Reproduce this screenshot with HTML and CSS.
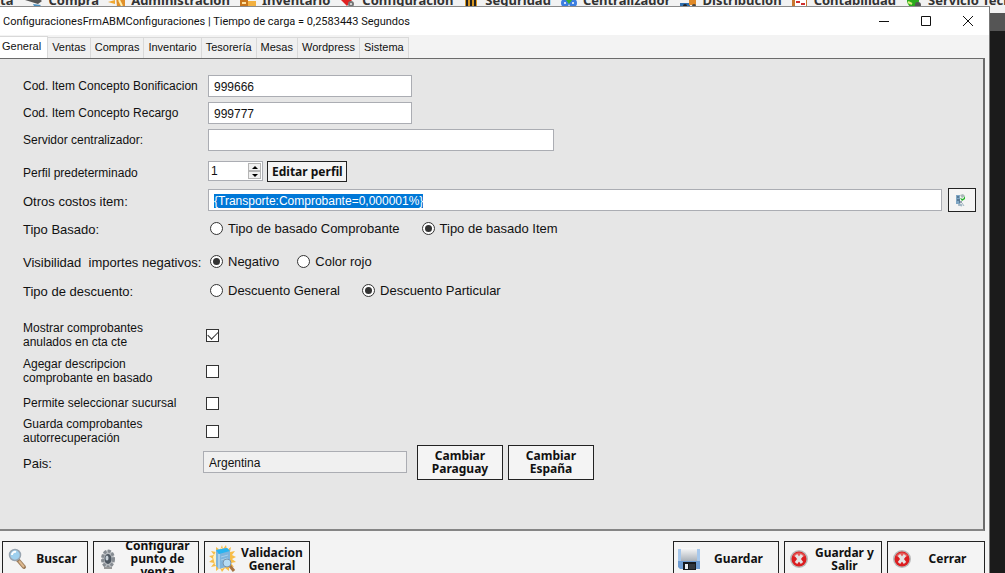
FILE: index.html
```html
<!DOCTYPE html>
<html lang="es">
<head>
  <meta charset="UTF-8">
  <meta name="viewport" content="width=device-width, initial-scale=1.0">
  <title>ConfiguracionesFrmABMConfiguraciones</title>
  <link rel="stylesheet" href="styles.css">
</head>
<body>
  <nav class="menubar">
    <span class="menu-item first">ta</span>
    <span class="menu-item">
      <svg width="20" height="16" viewBox="0 0 20 16"><path d="M1 8l12-3 5 4-4 3z" fill="#555"/><path d="M9 12l8 1-2 2-5-1z" fill="#4a8fc0"/></svg>
      Compra</span>
    <span class="menu-item">
      <svg width="20" height="16" viewBox="0 0 20 16"><path d="M1 10l7-2v4z" fill="#f0a830"/><path d="M9 4h9v11h-8z" fill="#e0902a"/><path d="M12 8l3 6" stroke="#fff0b0" stroke-width="2"/></svg>
      Administracion</span>
    <span class="menu-item">
      <svg width="20" height="16" viewBox="0 0 20 16"><path d="M2 4h8v11H2z" fill="#c8761c"/><path d="M10 9h8v6h-8z" fill="#f2b040"/><path d="M4 11h4" stroke="#ffe2a0" stroke-width="2"/></svg>
      Inventario</span>
    <span class="menu-item">
      <svg width="20" height="16" viewBox="0 0 20 16"><path d="M3 8h11l-5 6z" fill="#e02020"/><circle cx="13" cy="12" r="3" fill="#777"/><circle cx="13" cy="12" r="1" fill="#eee"/></svg>
      Configuracion</span>
    <span class="menu-item">
      <svg width="20" height="16" viewBox="0 0 20 16"><path d="M4 6h12v9H4z" fill="#d99722"/><path d="M6 8v7M10 8v7M14 8v7" stroke="#222" stroke-width="2"/></svg>
      Seguridad</span>
    <span class="menu-item">
      <svg width="20" height="16" viewBox="0 0 20 16"><circle cx="6" cy="11" r="4" fill="#3b7ee0"/><circle cx="14" cy="11" r="4" fill="#3b7ee0"/><path d="M7 8h6l-3 4z" fill="#3bb030"/><circle cx="6" cy="11" r="1" fill="#fff"/><circle cx="14" cy="11" r="1" fill="#fff"/></svg>
      Centralizador</span>
    <span class="menu-item">
      <svg width="20" height="16" viewBox="0 0 20 16"><path d="M1 11h10v4H1z" fill="#2f6fb0"/><path d="M10 7h7v6h-7z" fill="#e08a28"/><circle cx="6" cy="14" r="2" fill="#222"/><circle cx="15" cy="14" r="2" fill="#444"/></svg>
      Distribucion</span>
    <span class="menu-item">
      <svg width="20" height="16" viewBox="0 0 20 16"><path d="M2 5h15v10H2z" fill="#c87830"/><path d="M5 7h11v7H5z" fill="#fff"/><path d="M6 10h4M11 12h4" stroke="#d03030" stroke-width="2"/></svg>
      Contabilidad</span>
    <span class="menu-item">
      <svg width="20" height="16" viewBox="0 0 20 16"><circle cx="9" cy="9" r="6" fill="#2cab1e"/><path d="M4 10l4 2" stroke="#d9f07a" stroke-width="2"/><circle cx="14" cy="13" r="3" fill="#555"/></svg>
      Servicio Tecnico</span>
  </nav>

  <main class="window">
    <header class="titlebar">
      <span class="title">ConfiguracionesFrmABMConfiguraciones | Tiempo de carga = 0,2583443 Segundos</span>
      <button type="button" class="win-btn" aria-label="Minimizar">
        <svg width="12" height="12" viewBox="0 0 12 12"><path d="M1 6.500h10" stroke="#111"/></svg>
      </button>
      <button type="button" class="win-btn" aria-label="Maximizar">
        <svg width="12" height="12" viewBox="0 0 12 12"><path d="M1.500 1.500h9v9h-9z" fill="none" stroke="#111"/></svg>
      </button>
      <button type="button" class="win-btn" aria-label="Cerrar ventana">
        <svg width="12" height="12" viewBox="0 0 12 12"><path d="M1 1l10 10M11 1L1 11" stroke="#111"/></svg>
      </button>
    </header>

    <div class="tabs" role="tablist">
      <button type="button" class="tab active" role="tab" aria-selected="true">General</button>
      <button type="button" class="tab" role="tab">Ventas</button>
      <button type="button" class="tab" role="tab">Compras</button>
      <button type="button" class="tab" role="tab">Inventario</button>
      <button type="button" class="tab" role="tab">Tesorería</button>
      <button type="button" class="tab" role="tab">Mesas</button>
      <button type="button" class="tab" role="tab">Wordpress</button>
      <button type="button" class="tab" role="tab">Sistema</button>
    </div>

    <form class="panel" id="config-form">
      <div class="row h27">
        <label class="caption small" for="bonificacion">Cod. Item Concepto Bonificacion</label>
        <input type="text" class="box code" id="bonificacion" value="999666">
      </div>
      <div class="row h27">
        <label class="caption small" for="recargo">Cod. Item Concepto Recargo</label>
        <input type="text" class="box code" id="recargo" value="999777">
      </div>
      <div class="row h28">
        <label class="caption small" for="servidor">Servidor centralizador:</label>
        <input type="text" class="box server" id="servidor">
      </div>
      <div class="row h34">
        <label class="caption small low" for="perfil">Perfil predeterminado</label>
        <div class="spinner">
          <input type="number" id="perfil" value="1">
          <div class="arrows">
            <button type="button" id="perfil-up" aria-label="Subir"><svg width="6" height="3" viewBox="0 0 6 3"><path d="M0 3l3-3 3 3z"/></svg></button>
            <button type="button" id="perfil-down" aria-label="Bajar"><svg width="6" height="3" viewBox="0 0 6 3"><path d="M0 0l3 3 3-3z"/></svg></button>
          </div>
        </div>
        <button type="button" class="btn edit">Editar perfil</button>
      </div>
      <div class="row h24">
        <label class="caption low" for="costos">Otros costos item:</label>
        <input type="text" class="box costs" id="costos" value="{Transporte:Comprobante=0,000001%}">
        <button type="button" class="btn pick" aria-label="Elegir costos">
          <svg width="12" height="14" viewBox="0 0 12 14"><path d="M1 2h4v9H1z" fill="#7fa6c4"/><path d="M2 4h2M2 7h3M4 9h3" stroke="#34506a"/><path d="M5 2l3-1 2 2-3 2z" fill="#a9b8b8"/><path d="M5 5l3 1 2-3v3l-3 2z" fill="#27b52c"/><path d="M3 12l3-1 1 2zM7 10l2 3" fill="#9fb4c2" stroke="#9fb4c2"/></svg>
        </button>
      </div>
      <div class="row h32" role="radiogroup" aria-labelledby="lb-basado">
        <span class="caption low" id="lb-basado">Tipo Basado:</span>
        <div class="options">
          <label><input type="radio" name="basado">Tipo de basado Comprobante</label>
          <label><input type="radio" name="basado" checked>Tipo de basado Item</label>
        </div>
      </div>
      <div class="row h34" role="radiogroup" aria-labelledby="lb-negativos">
        <span class="caption low" id="lb-negativos">Visibilidad&nbsp; importes negativos:</span>
        <div class="options close">
          <label><input type="radio" name="negativos" checked>Negativo</label>
          <label><input type="radio" name="negativos">Color rojo</label>
        </div>
      </div>
      <div class="row h24" role="radiogroup" aria-labelledby="lb-descuento">
        <span class="caption low" id="lb-descuento">Tipo de descuento:</span>
        <div class="options">
          <label><input type="radio" name="descuento">Descuento General</label>
          <label><input type="radio" name="descuento" checked>Descuento Particular</label>
        </div>
      </div>

      <div class="checks">
        <div class="row h36">
          <label class="caption" for="anulados">Mostrar comprobantes<br>anulados en cta cte</label>
          <input type="checkbox" id="anulados" checked>
        </div>
        <div class="row h36">
          <label class="caption" for="descripcion">Agegar descripcion<br>comprobante en basado</label>
          <input type="checkbox" id="descripcion">
        </div>
        <div class="row h28">
          <label class="caption" for="sucursal">Permite seleccionar sucursal</label>
          <input type="checkbox" id="sucursal">
        </div>
        <div class="row h28">
          <label class="caption" for="recuperacion">Guarda comprobantes<br>autorrecuperación</label>
          <input type="checkbox" id="recuperacion">
        </div>
      </div>

      <div class="row h34 country">
        <label class="caption low" for="pais">Pais:</label>
        <input type="text" class="box code" id="pais" value="Argentina" readonly>
        <button type="button" class="btn change">Cambiar Paraguay</button>
        <button type="button" class="btn change">Cambiar España</button>
      </div>
    </form>

    <footer class="actions">
      <button type="button" class="btn action narrow">
        <svg width="20" height="22" viewBox="0 0 20 22"><path d="M11 12l6 7" stroke="#9a7a58" stroke-width="4" stroke-linecap="round"/><path d="M12 13l5 6" stroke="#dcb88e" stroke-width="2"/><circle cx="8" cy="7" r="5.500" fill="#9fd0ee" stroke="#98a4b0" stroke-width="1.500"/><path d="M5 7a3 3 0 0 1 4-3" fill="none" stroke="#fff" stroke-width="2"/></svg>
        <span>Buscar</span>
      </button>
      <button type="button" class="btn action">
        <svg width="20" height="22" viewBox="0 0 20 22"><ellipse cx="10" cy="11" rx="6" ry="9" fill="#b9bdc1"/><ellipse cx="10" cy="11" rx="5.500" ry="8" fill="none" stroke="#858b91" stroke-width="3" stroke-dasharray="3 1.500"/><ellipse cx="10" cy="11" rx="3.500" ry="5" fill="#4c5660"/><ellipse cx="9" cy="10" rx="1.500" ry="2.500" fill="#c9d2da"/><path d="M6 20h8" stroke="#999" stroke-width="2"/></svg>
        <span>Configurar punto de venta</span>
      </button>
      <button type="button" class="btn action">
        <svg width="27" height="27" viewBox="0 0 27 27"><path d="M13 0l1 4 3-4 1 5 4-3-1 5 5-1-3 4 4 2-4 2 4 3-5 1 3 4-5-1 0 5-4-3-3 4-2-4-4 3 0-5-5 1 3-4-5-1 4-3-4-3 5-1-3-4 5 1 0-5 4 3z" fill="#f7bd48"/><path d="M13 3l2 4 4 0 2 6-2 7-6 4-7-4-2-8 3-6z" fill="#fff3c4"/><path d="M7 5l11-2 3 3v15l-11 3-3-3z" fill="#7eb4dc"/><path d="M7 5l11-2 3 3-11 3z" fill="#28b4f0"/><path d="M10 9v15" stroke="#d8ecf8"/><path d="M12 12l7-2M12 15l7-2" stroke="#a8d0ea" fill="none"/><circle cx="18" cy="18" r="4" fill="#b5dcf4" stroke="#7894ae"/><path d="M21 21l4 5" stroke="#a87443" stroke-width="3"/></svg>
        <span>Validacion General</span>
      </button>
      <button type="button" class="btn action save">
        <svg width="22" height="22" viewBox="0 0 22 22"><defs><linearGradient id="disk" x2="0" y2="1"><stop offset="0" stop-color="#fafafa"/><stop offset="1" stop-color="#a9b0b8"/></linearGradient></defs><path d="M0 1h22v20H2l-2-2z" fill="#6e9cd2"/><path d="M0 1h3v12H0zM19 1h3v12h-3z" fill="#a7c8ec"/><path d="M3 0h16v13H3z" fill="url(#disk)"/><path d="M5 14h13v8H5z" fill="#15191e"/><path d="M7 16h3v5H7z" fill="#e9edf2"/><path d="M11 16h6v5h-6z" fill="#30363d"/></svg>
        <span>Guardar</span>
      </button>
      <button type="button" class="btn action mid">
        <svg width="20" height="20" viewBox="0 0 20 20"><circle cx="10" cy="10" r="9" fill="#b9b9b9"/><circle cx="10" cy="10" r="7.500" fill="#dc1d20"/><path d="M4 7a7 7 0 0 1 12 0c-4 2-8 2-12 0z" fill="#e65a58"/><path d="M7 6l6 8M13 6l-6 8" stroke="#e4e4e4" stroke-width="3"/></svg>
        <span>Guardar y Salir</span>
      </button>
      <button type="button" class="btn action mid">
        <svg width="20" height="20" viewBox="0 0 20 20"><circle cx="10" cy="10" r="9" fill="#b9b9b9"/><circle cx="10" cy="10" r="7.500" fill="#dc1d20"/><path d="M4 7a7 7 0 0 1 12 0c-4 2-8 2-12 0z" fill="#e65a58"/><path d="M7 6l6 8M13 6l-6 8" stroke="#e4e4e4" stroke-width="3"/></svg>
        <span>Cerrar</span>
      </button>
    </footer>
  </main>

  <script>
const perfil = document.getElementById("perfil");
const costos = document.getElementById("costos");

document.getElementById("perfil-up").addEventListener("click", () => perfil.stepUp());
document.getElementById("perfil-down").addEventListener("click", () => perfil.stepDown());

costos.focus();
costos.select();
  </script>
</body>
</html>
```
FILE: styles.css
```css
* {
  box-sizing: border-box;
}

body {
  margin: 0;
  height: 100vh;
  overflow: hidden;
  font-family: "Liberation Sans", Arial, sans-serif;
  font-size: 13px;
  color: #111;
  background: linear-gradient(#555 31px, #1b1b1b 31px);
}

button,
input {
  font-family: inherit;
  color: inherit;
  margin: 0;
}

/* menu principal, queda tapado por la ventana */
.menubar {
  display: flex;
  align-items: flex-end;
  gap: 8px;
  height: 13px;
  padding-bottom: 5px;
  overflow: hidden;
  background: #f2f2f2;
  font-family: "Noto Sans", sans-serif;
  font-size: 13px;
  font-weight: bold;
  line-height: 16px;
  color: #333;
}

.menu-item {
  display: flex;
  flex: none;
  gap: 4px;
  white-space: nowrap;
}

.menu-item.first {
  padding-right: 3px;
}

.window {
  position: relative;
  margin: -7px 15px 0 0;
  background: #f3f3f3;
  border-top: 1px solid #8a8a8a;
  border-right: 1px solid #777;
}

.titlebar {
  display: flex;
  align-items: center;
  height: 28px;
  padding-left: 3px;
  background: #fff;
  font-family: Roboto, "Noto Sans", sans-serif;
  font-size: 11px;
}

.title {
  flex: 1;
}

.win-btn {
  display: flex;
  align-items: center;
  justify-content: center;
  width: 42px;
  height: 28px;
  padding: 0;
  border: 0;
  background: none;
}

.tabs {
  display: flex;
  align-items: flex-end;
  height: 23px;
}

.tab {
  height: 21px;
  padding: 0 4px 2px;
  border: 1px solid #d9d9d9;
  border-left: 0;
  border-bottom: 0;
  background: #f0f0f0;
  font-size: 11px;
}

.tab.active {
  height: 22px;
  padding: 0 6px 4px 2px;
  background: #fff;
}

.panel {
  margin-right: 4px;
  padding: 13px 7px 50px 23px;
  background: #e6e6e6;
  border: 1px solid #6b6b6b;
  border-left: 0;
  border-right-width: 2px;
  border-bottom: 2px solid #858585;
}

.row {
  display: flex;
  align-items: center;
}

.h24 { height: 24px; }
.h27 { height: 27px; }
.h28 { height: 28px; }
.h32 { height: 32px; }
.h34 { height: 34px; }
.h36 { height: 36px; }

.caption {
  flex: none;
  width: 185px;
  line-height: 14px;
  white-space: nowrap;
}

.small {
  font-size: 12px;
}

.low {
  padding-top: 3px;
}

.box {
  height: 22px;
  padding: 2px 5px 0;
  border: 1px solid #abadb3;
  background: #fff;
  font-size: 12px;
  outline: none;
}

.box::selection {
  background: #0078d7;
  color: #fff;
}

.box[readonly] {
  background: #f0f0f0;
}

.code {
  width: 204px;
}

.server {
  width: 346px;
}

.costs {
  flex: 1;
  min-width: 0;
}

.spinner {
  display: flex;
  width: 55px;
  height: 20px;
  padding: 1px;
  border: 1px solid #abadb3;
  background: #fff;
}

.spinner input {
  flex: 1;
  min-width: 0;
  padding: 0 1px;
  border: 0;
  outline: none;
  font-size: 12px;
  appearance: textfield;
}

.arrows {
  display: flex;
  flex-direction: column;
  width: 13px;
}

.arrows button {
  display: flex;
  flex: 1;
  align-items: center;
  justify-content: center;
  padding: 0;
  border: 1px solid #b5b5b5;
  background: #f0f0f0;
}

.btn {
  flex: none;
  padding: 0 4px;
  border: 1px solid #222;
  background: #f4f4f4;
  font-family: "Noto Sans", sans-serif;
  font-size: 12px;
  font-weight: bold;
  line-height: 13px;
}

.edit {
  width: 80px;
  height: 21px;
  margin-left: 4px;
  white-space: nowrap;
}

.pick {
  display: flex;
  align-items: center;
  width: 28px;
  height: 24px;
  padding: 0 6px;
  margin-left: 6px;
}

.options {
  display: flex;
  gap: 22px;
  padding-left: 2px;
}

.options.close {
  gap: 18px;
}

.options label {
  display: flex;
  align-items: center;
  gap: 5px;
  white-space: nowrap;
}

input[type="radio"],
input[type="checkbox"] {
  display: grid;
  place-content: center;
  appearance: none;
  width: 13px;
  height: 13px;
  border: 1px solid #333;
  background: #fff;
}

input[type="radio"] {
  border-radius: 50%;
}

input[type="radio"]:checked::before {
  content: "";
  width: 7px;
  height: 7px;
  border-radius: 50%;
  background: #333;
}

input[type="checkbox"]:checked::before {
  content: "";
  width: 9px;
  height: 5px;
  border: solid #333;
  border-width: 0 0 1px 1px;
  transform: translateY(-1px) rotate(-45deg);
}

.checks {
  margin-top: 15px;
}

.checks .row {
  font-size: 12px;
}

.checks .caption {
  width: 183px;
}

.country .caption {
  width: 180px;
}

.change {
  width: 86px;
  height: 35px;
  padding: 0 10px;
  margin-left: 5px;
}

.country .box + .change {
  margin-left: 10px;
}

.actions {
  display: flex;
  gap: 5px;
  padding: 10px 4px 9px 2px;
}

.action {
  display: flex;
  align-items: center;
  width: 106px;
  height: 35px;
  padding: 0 1px 0 4px;
  overflow: hidden;
}

.action svg {
  flex: none;
}

.action span {
  flex: 1;
}

.narrow {
  width: 86px;
}

.mid {
  width: 98px;
}

.save {
  margin-left: auto;
}
```
